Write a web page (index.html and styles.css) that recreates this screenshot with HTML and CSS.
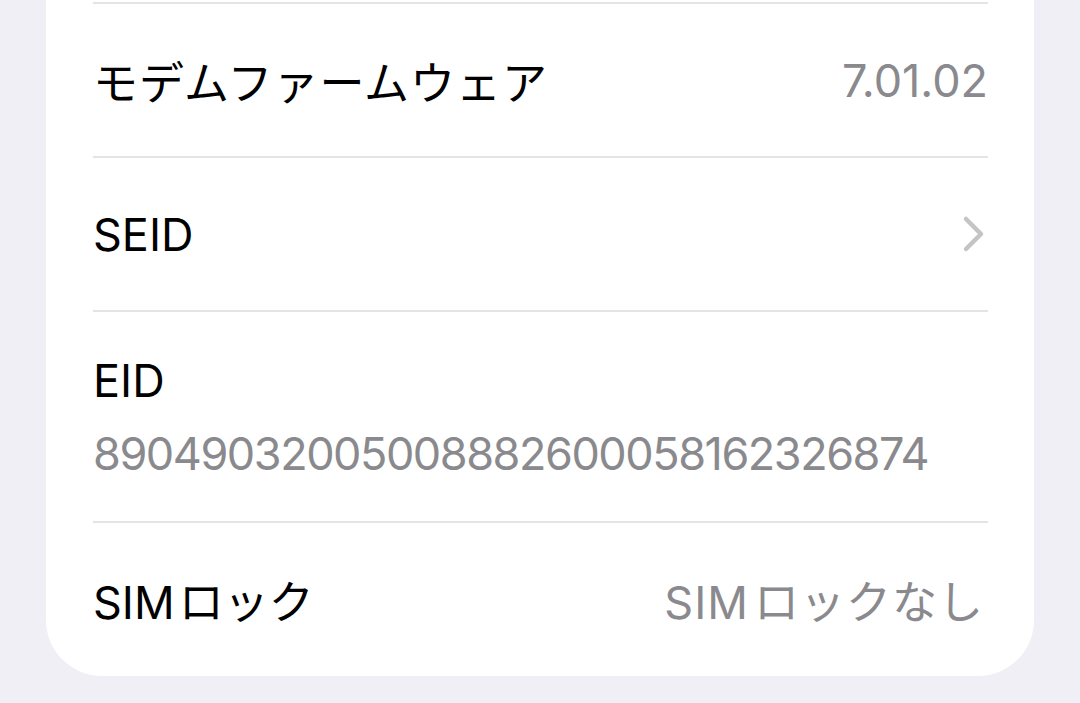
FILE: index.html
```html
<!DOCTYPE html>
<html lang="ja">
<head>
  <meta charset="UTF-8">
  <meta name="viewport" content="width=device-width, initial-scale=1.0">
  <title>情報</title>
  <link rel="stylesheet" href="styles.css">
</head>
<body>
  <div class="card">
    <div class="row">
      <span class="label jp">モデムファームウェア</span>
      <span class="value">7.01.02</span>
    </div>
    <div class="row">
      <span class="label">SEID</span>
      <svg class="chevron" width="24" height="38" viewBox="0 0 24 38">
        <path d="M4 4 L19 19 L4 34" fill="none" stroke="#c4c4c7" stroke-width="4.5" stroke-linecap="round" stroke-linejoin="round"/>
      </svg>
    </div>
    <div class="row stacked">
      <span class="label">EID</span>
      <span class="value number">89049032005008882600058162326874</span>
    </div>
    <div class="row">
      <span class="label">SIM&#8202;ロック</span>
      <span class="value jp">SIM&#8202;ロックなし</span>
    </div>
  </div>
</body>
</html>
```

FILE: styles.css
```css
body {
  margin: 0;
  background-color: #f0eff5;
  font-family: Inter, "Noto Sans CJK JP", sans-serif;
}

.card {
  margin: 0 46px;
  padding-top: 2px;
  background: white;
  border-radius: 0 0 56px 56px;
}

.row {
  margin: 0 46px 0 47px;
  height: 154px;
  box-sizing: border-box;
  border-top: 2px solid #e4e4e8;
  display: flex;
  align-items: center;
  justify-content: space-between;
  font-size: 45px;
}

.row:last-child {
  height: 155px;
}

.label {
  color: #000;
}

.label.jp {
  letter-spacing: 1px;
}

.value {
  color: #8a8a8e;
}

.value.jp {
  letter-spacing: 1px;
  margin-right: 4px;
}

.value.number {
  letter-spacing: -1.45px;
}

.chevron {
  margin-right: 2px;
}

.row.stacked {
  height: 211px;
  flex-direction: column;
  align-items: flex-start;
  justify-content: center;
  gap: 18px;
}
```
